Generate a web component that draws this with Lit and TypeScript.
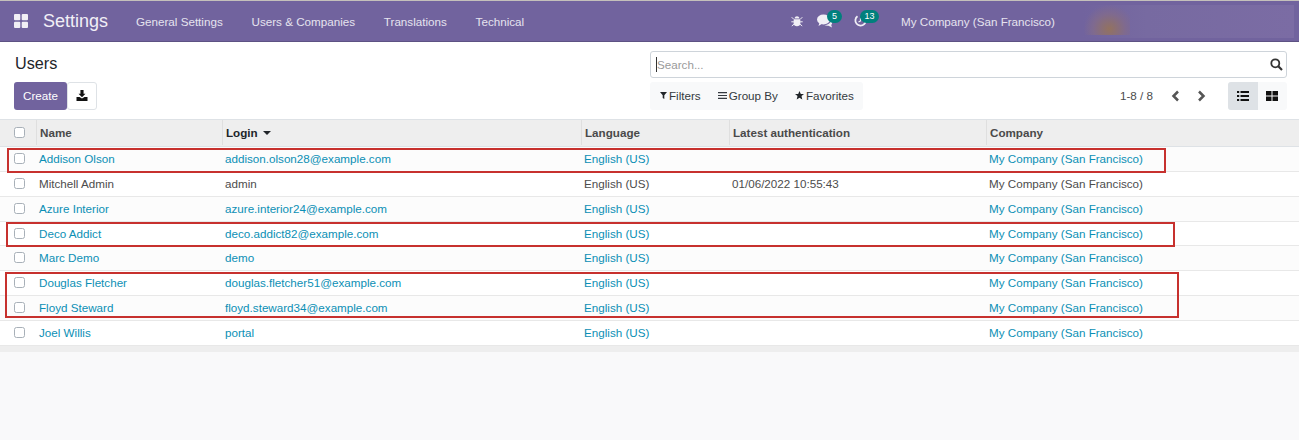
import { LitElement, html, css, svg } from "lit";
import { customElement } from "lit/decorators.js";

const rows = [
  ["Addison Olson", "addison.olson28@example.com", "", 1],
  ["Mitchell Admin", "admin", "01/06/2022 10:55:43", 0],
  ["Azure Interior", "azure.interior24@example.com", "", 1],
  ["Deco Addict", "deco.addict82@example.com", "", 1],
  ["Marc Demo", "demo", "", 1],
  ["Douglas Fletcher", "douglas.fletcher51@example.com", "", 1],
  ["Floyd Steward", "floyd.steward34@example.com", "", 1],
  ["Joel Willis", "portal", "", 1],
] as const;

const marks = [
  { l: 7, t: 148, w: 1159, h: 24.5 },
  { l: 6, t: 222, w: 1169, h: 25 },
  { l: 5, t: 272, w: 1174, h: 46 },
];

const grid = svg`<rect x="0" y="0" width="6.3" height="6.3" rx="1"/><rect x="7.7" y="0" width="6.3" height="6.3" rx="1"/><rect x="0" y="7.7" width="6.3" height="6.3" rx="1"/><rect x="7.7" y="7.7" width="6.3" height="6.3" rx="1"/>`;

@customElement("app-root")
export class AppRoot extends LitElement {
  static styles = css`
    :host { display: block; width: 1299px; height: 440px; position: relative; overflow: hidden; background: #f9f9fa;
      font-family: "Liberation Sans", Arial, sans-serif; font-size: 11.65px; color: #4c4c4c; }
    .nav { height: 40px; border-top: 1px solid #c4c0bb; border-bottom: 1px solid #5d5283; background: #71639e; display: flex; align-items: center; color: #fff; position: relative; box-sizing: content-box; }
    .apps { margin-left: 14px; width: 14px; height: 14px; fill: #fff; opacity: .9; display: block; }
    .brand { font-size: 18px; margin-left: 15px; color: #f1eff6; width: 93px; }
    .menu { font-size: 11.65px; color: #e6e3ef; margin-right: 28.8px; }
    .sys { margin-left: auto; display: flex; align-items: center; height: 40px; position: relative; z-index: 1; }
    .ic { position: relative; display: block; }
    .badge { position: absolute; background: #00807d; color: #fff; font-size: 9px; line-height: 13px; height: 13px; border-radius: 7px; text-align: center; }
    .chat { margin-left: 14px; width: 16px; height: 14px; }
    .clock { margin-left: 21px; width: 13px; height: 14px; }
    .b5 { left: 10px; top: -4px; width: 15px; }
    .b13 { left: 6px; top: -4px; width: 19px; }
    .co { color: #e6e3ef; font-size: 11.65px; margin-left: 34px; width: 398px; white-space: nowrap; }
    .blur { position: absolute; left: 1083px; top: 4px; width: 211px; height: 33px; background: linear-gradient(90deg, #71639e 0%, #776aa1 30%, #7b6ca4 100%); }
    .blob { position: absolute; left: 1px; top: 0; width: 46px; height: 30px; background: radial-gradient(ellipse at 55% 80%, #93725f 0%, #7f6a8f 45%, rgba(113,99,158,0) 72%); }
    .cp { height: 77px; background: #fff; border-bottom: 1px solid #dee2e6; box-sizing: content-box; display: grid; grid-template-columns: 636px 1fr; }
    .left { padding: 0 0 0 14px; }
    h1 { margin: 11px 0 0 1px; font-size: 16.2px; font-weight: 400; line-height: 20px; color: #212529; height: 29px; }
    .btns { display: flex; }
    .btn { height: 28px; border-radius: 3px; box-sizing: border-box; display: flex; align-items: center; justify-content: center; }
    .create { width: 53px; background: #71639e; color: #fff; font-size: 11.65px; padding-bottom: 1px; }
    .dl { width: 30px; background: #fff; border: 1px solid #dee2e6; padding-bottom: 1px; }
    .rightp { padding-top: 9px; margin-left: 14px; }
    .search { width: 637px; height: 27px; box-sizing: border-box; border: 1px solid #ced4da; border-radius: 3px; background: #fff; display: flex; align-items: center; padding: 0 3px 0 5px; color: #9a9a9a; font-size: 11.65px; }
    .caret { width: 1px; height: 15px; background: #333; }
    .search span { flex: 1; }
    .row2 { display: flex; margin-top: 4px; align-items: center; height: 28px; }
    .filters { width: 213px; height: 28px; background: #f8f9fa; border-radius: 3px; display: flex; align-items: center; color: #343a40; font-size: 11.65px; padding: 0 0 1px 10px; box-sizing: border-box; }
    .filters div { display: flex; align-items: center; gap: 2px; }
    .f2 { margin-left: 17px; }
    .f3 { margin-left: 17px; }
    .pager { margin-left: 257px; color: #4c4c4c; font-size: 11.65px; width: 50px; padding-bottom: 1px; }
    .arrows { display: flex; gap: 13px; width: 58px; }
    .views { display: flex; width: 59px; height: 28px; background: #f8f9fa; border-radius: 3px; }
    .views div { width: 29.5px; display: flex; align-items: center; justify-content: center; }
    .views .on { background: #dee2e6; border-radius: 3px 0 0 3px; }
    .table { background: #fff; }
    .tr { display: grid; grid-template-columns: 36px 186px 359px 148px 257px 1fr; height: 25px; padding-bottom: 1px; border-bottom: 1px solid #e8e8e8; box-sizing: border-box; align-items: center; background: #fff; }
    .tr.odd { background: #fcfcfc; }
    .tr.short { height: 24px; padding-bottom: 0; }
    .tr > div { padding-left: 3px; white-space: nowrap; font-size: 11.65px; }
    .tr.th { height: 27px; padding-bottom: 0; background: #eeeeee; border-bottom: 1px solid #dee2e6; align-items: start; }
    .tr.th > div { font-weight: 700; color: #4a4a4a; height: 25px; line-height: 25px; box-shadow: inset 1px 0 0 #dfdfdf; padding-left: 4px; }
    .tr.th > .sorted { color: #212529; display: flex; align-items: center; gap: 5px; }
    .tr > .cb, .tr.th > .cb { padding: 0 0 0 3px; display: flex; justify-content: center; align-items: center; box-shadow: none; }
    .check { width: 9px; height: 9px; border: 1px solid #a8b0b8; border-radius: 2.5px; background: #fff; }
    .link { color: #0b8fb5; }
    .foot { height: 6px; background: #eeeeee; }
    .mark { position: absolute; box-sizing: border-box; border: 2px solid #c7312e; pointer-events: none; }
  `;

  render() {
    const link = (t: string, isLink: boolean) => html`<div class=${isLink ? "link" : ""}>${t}</div>`;
    return html`
      <div class="nav">
        <svg class="apps" viewBox="0 0 14 14">${grid}</svg>
        <div class="brand">Settings</div>
        <div class="menu">General Settings</div>
        <div class="menu">Users &amp; Companies</div>
        <div class="menu">Translations</div>
        <div class="menu">Technical</div>
        <div class="blur"><div class="blob"></div></div>
        <div class="sys">
          <svg class="ic" width="12" height="12" viewBox="0 0 12 12" fill="#f1eff6"><path d="M3.500 3.400C3.800 2 4.800 1.200 6 1.200s2.200.8 2.500 2.200zM3 4.200h6c.3.6.4 1.200.4 1.800v2.200C9.400 10 7.900 11.300 6 11.300S2.600 10 2.600 8.200V6c0-.6.1-1.200.4-1.800z"/><path d="M.7 2.200l2.300 2.300M11.300 2.200L9 4.500M.3 6.800h2.500M9.200 6.800h2.500M.8 11l2.200-1.800M11.200 11L9 9.200" stroke="#f1eff6" fill="none"/></svg>
          <div class="ic chat">
            <svg width="16" height="14" viewBox="0 0 16 14" fill="#f1eff6"><ellipse cx="6.500" cy="5.500" rx="6.500" ry="5"/><path d="M2.500 8.500L1.500 12l4-2.500zM14 6.500c1.500 1.400 1.500 3.400.2 4.500l.8 2.500-3.500-1.800c-1.500.3-3 0-4-.7 3.500 0 6.200-1.800 6.500-4.500z"/></svg>
            <span class="badge b5">5</span>
          </div>
          <div class="ic clock">
            <svg width="13" height="13" viewBox="0 0 13 13" fill="none" stroke="#f1eff6" stroke-width="1.800"><path d="M3.500 2.200A5.200 5.200 0 1 0 10 2.500"/><path d="M6.500 4v3l-2 1" stroke-width="1.200"/></svg>
            <span class="badge b13">13</span>
          </div>
          <div class="co">My Company (San Francisco)</div>
        </div>
      </div>
      <div class="cp">
        <div class="left">
          <h1>Users</h1>
          <div class="btns">
            <div class="btn create">Create</div>
            <div class="btn dl"><svg width="12" height="11" viewBox="0 0 12 12" fill="#111"><path d="M4.300 0h3.400v4.200h2.100L6 8 2.200 4.200h2.100z"/><path d="M0 7.500h3.300L6 9.200l2.700-1.700H12V12H0z"/></svg></div>
          </div>
        </div>
        <div class="rightp">
          <div class="search"><div class="caret"></div><span>Search...</span>
            <svg width="13" height="13" viewBox="0 0 13 13" fill="none" stroke="#333" stroke-width="1.800"><circle cx="5.300" cy="5.300" r="4"/><path d="M8.300 8.300L12 12" stroke-width="2.200"/></svg></div>
          <div class="row2">
            <div class="filters">
              <div><svg width="7" height="7" viewBox="0 0 7 7" fill="#212529"><path d="M0 0h7L4.300 3.200V7L2.700 6V3.200z"/></svg>Filters</div>
              <div class="f2"><svg width="9" height="7" viewBox="0 0 9 7" fill="#343a40"><path d="M0 0h9v1.200H0zM0 2.900h9v1.200H0zM0 5.800h9V7H0z"/></svg>Group By</div>
              <div class="f3"><svg width="9" height="9" viewBox="0 0 9 9" fill="#212529"><path d="M4.500 0l1.300 3h3.200L6.500 5l.8 3.500-2.800-1.800-2.800 1.800.8-3.500L0 3h3.200z"/></svg>Favorites</div>
            </div>
            <div class="pager">1-8 / 8</div>
            <div class="arrows">
              <svg width="12" height="12" viewBox="0 0 12 12" fill="none" stroke="#555" stroke-width="2.500"><path d="M8 1.500L3.500 6 8 10.500"/></svg>
              <svg width="12" height="12" viewBox="0 0 12 12" fill="none" stroke="#555" stroke-width="2.500"><path d="M4 1.500L8.500 6 4 10.500"/></svg>
            </div>
            <div class="views">
              <div class="on"><svg width="12" height="10" viewBox="0 0 12 10" fill="#111"><path d="M0 0h2.200v2H0zM3.500 0H12v2H3.500zM0 4h2.200v2H0zM3.500 4H12v2H3.500zM0 8h2.200v2H0zM3.500 8H12v2H3.500z"/></svg></div>
              <div><svg width="12" height="10" viewBox="0 0 12 10" fill="#111"><path d="M0 0h5.500v4.400H0zM6.500 0H12v4.400H6.500zM0 5.600h5.500V10H0zM6.500 5.600H12V10H6.500z"/></svg></div>
            </div>
          </div>
        </div>
      </div>
      <div class="table">
        <div class="tr th">
          <div class="cb"><div class="check"></div></div>
          <div>Name</div>
          <div class="sorted">Login <svg width="8" height="4" viewBox="0 0 8 4" fill="#212529"><path d="M0 0h8L4 4z"/></svg></div>
          <div>Language</div>
          <div>Latest authentication</div>
          <div>Company</div>
        </div>
        ${rows.map(
          (r, i) => html`<div class="tr ${i % 2 === 0 ? "odd" : ""} ${i === 3 ? "short" : ""}">
            <div class="cb"><div class="check"></div></div>
            ${link(r[0], !!r[3])}
            ${link(r[1], !!r[3])}
            ${link("English (US)", !!r[3])}
            <div>${r[2]}</div>
            ${link("My Company (San Francisco)", !!r[3])}
          </div>`
        )}
        <div class="foot"></div>
      </div>
      ${marks.map(
        (m) => html`<div class="mark" style="left:${m.l}px;top:${m.t}px;width:${m.w}px;height:${m.h}px"></div>`
      )}
    `;
  }
}
